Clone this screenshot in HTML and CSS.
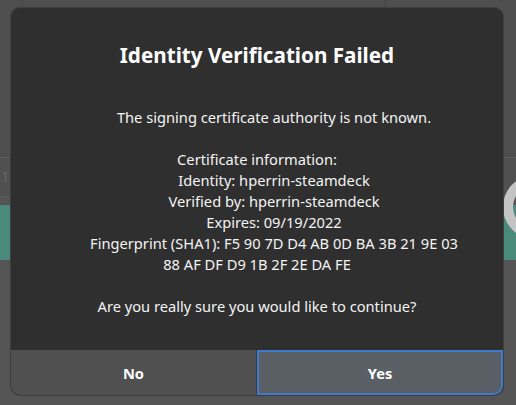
FILE: index.html
```html
<!DOCTYPE html>
<html>
<head>
<meta charset="utf-8">
<link rel="stylesheet" href="styles.css">
</head>
<body>
<div class="backdrop">
  <div class="bg-top"></div>
  <div class="bg-vline"></div>
  <div class="bg-row"><span class="bg-num">19</span></div>
  <div class="bg-teal"></div>
  <div class="bg-ring"></div>
</div>
<div class="dialog">
  <div class="content">
    <h1 class="title">Identity Verification Failed</h1>
    <div class="message">
      <p class="line indent">The signing certificate authority is not known.</p>
      <p class="line blank"></p>
      <p class="line">Certificate information:</p>
      <p class="line indent">Identity: hperrin-steamdeck</p>
      <p class="line indent">Verified by: hperrin-steamdeck</p>
      <p class="line indent">Expires: 09/19/2022</p>
      <p class="line indent">Fingerprint (SHA1): F5 90 7D D4 AB 0D BA 3B 21 9E 03</p>
      <p class="line">88 AF DF D9 1B 2F 2E DA FE</p>
      <p class="line blank"></p>
      <p class="line">Are you really sure you would like to continue?</p>
    </div>
  </div>
  <div class="footer">
    <button class="btn btn-no">No</button>
    <button class="btn btn-yes">Yes</button>
  </div>
</div>
</body>
</html>
```
FILE: styles.css
```css
* { box-sizing: border-box; }
html, body {
  margin: 0;
  padding: 0;
  width: 516px;
  height: 405px;
  overflow: hidden;
}
body {
  background: #545454;
  font-family: "Noto Sans", "Open Sans", sans-serif;
  position: relative;
}
.backdrop {
  position: absolute;
  inset: 0;
  overflow: hidden;
}
.bg-top {
  position: absolute;
  left: 0; top: 0;
  width: 516px; height: 157px;
  background: #4e4e4e;
}
.bg-vline {
  position: absolute;
  left: 385px; top: 0;
  width: 1px; height: 10px;
  background: #444;
}
.bg-row {
  position: absolute;
  left: 0; top: 157px;
  width: 516px; height: 40px;
  background: #505050;
  border-top: 1px solid #5c5c5c;
  border-bottom: 1px solid #5c5c5c;
}
.bg-num {
  position: absolute;
  left: 1px; top: 8px;
  font-size: 15px;
  color: #666;
}
.bg-teal {
  position: absolute;
  left: 0; top: 205px;
  width: 516px; height: 55px;
  background: #4a8a7d;
}
.bg-ring {
  position: absolute;
  left: 503px; top: 175px;
  width: 64px; height: 64px;
  border-radius: 50%;
  border: 10px solid #c4c4c4;
}
.dialog {
  position: absolute;
  left: 11px; top: 8px;
  width: 492px; height: 387px;
  background: #2f2f2f;
  border-radius: 9px;
  overflow: hidden;
  display: flex;
  flex-direction: column;
  box-shadow: 0 0 0 1px #3e3e3e;
}
.content {
  flex: 1;
  display: flex;
  flex-direction: column;
  align-items: center;
  padding-top: 33px;
  color: #f4f4f4;
}
.title {
  margin: 0;
  font-size: 20.67px;
  line-height: 28px;
  font-weight: 700;
  color: #ffffff;
  text-align: center;
}
.message {
  margin-top: 38px;
  text-align: center;
  font-size: 14.67px;
  line-height: 21px;
}
.line {
  margin: 0;
  height: 21px;
  white-space: nowrap;
}
.indent {
  padding-left: 34px;
}
.footer {
  height: 45px;
  display: grid;
  grid-template-columns: 246px 1fr;
}
.btn {
  margin: 0;
  font-family: inherit;
  font-size: 14.67px;
  font-weight: 700;
  color: #ffffff;
  border: none;
  padding: 0;
}
.btn-no {
  background: #505050;
  border-right: 1px solid #3a3a3a;
}
.btn-yes {
  background: #5a5f66;
  border: 2px solid #3f7ace;
  border-bottom-right-radius: 9px;
}
```
